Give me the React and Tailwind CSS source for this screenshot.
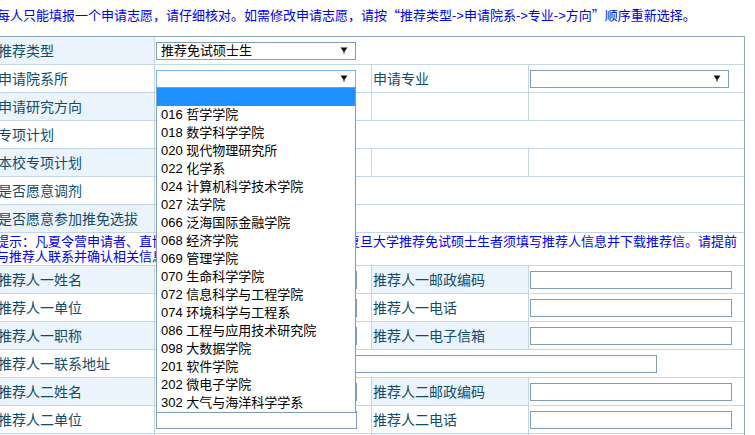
import React from "react";

const FONT = { fontFamily: '"Liberation Sans", "Noto Sans CJK SC", sans-serif' };

function Arrow() {
  return (
    <svg width="8" height="7" viewBox="0 0 8 7" className="shrink-0">
      <path d="M0.5 0.5H7.5L4 5.5Z" fill="#111" />
      <rect x="3.5" y="5" width="1" height="1.5" fill="#111" />
    </svg>
  );
}

function Select({ text = "", w = "w-[200px]", border = "border-[#7f9db9]" }) {
  return (
    <div className={`flex items-center justify-between h-[18px] ${w} border ${border} bg-white pl-[4px] pr-[7px] text-[13px] leading-[16px] text-black`}>
      <span className="whitespace-nowrap">{text}</span>
      <Arrow />
    </div>
  );
}

function Input({ w = "w-[201px]" }) {
  return <div className={`h-[18px] ${w} border border-[#7f9db9] bg-white`} />;
}

const options = [
  "",
  "016 哲学学院",
  "018 数学科学学院",
  "020 现代物理研究所",
  "022 化学系",
  "024 计算机科学技术学院",
  "027 法学院",
  "066 泛海国际金融学院",
  "068 经济学院",
  "069 管理学院",
  "070 生命科学学院",
  "072 信息科学与工程学院",
  "074 环境科学与工程系",
  "086 工程与应用技术研究院",
  "098 大数据学院",
  "201 软件学院",
  "202 微电子学院",
  "302 大气与海洋科学学系",
];

const LBL = "text-[14px] leading-[18px] text-[#124c6c] whitespace-nowrap";
const ROW = "flex h-[28px] border-b border-[#c3d6e7]";

function Label({ children, blue, w = "w-[159px]", pl = "pl-[2px]" }) {
  return (
    <div className={`${w} shrink-0 flex items-center border-r border-[#c3d6e7] ${pl} ${blue ? "bg-[#ebf4fc]" : "bg-white"} ${LBL}`}>
      {children}
    </div>
  );
}

function Cell({ children, w, last }) {
  return (
    <div className={`${w} shrink-0 flex items-center pl-[1px] ${last ? "" : "border-r border-[#c3d6e7]"}`}>
      {children}
    </div>
  );
}

function FullRow({ label, blue, children }) {
  return (
    <div className={ROW}>
      <Label blue={blue}>{label}</Label>
      <div className="flex-1 flex items-center pl-[1px]">{children}</div>
    </div>
  );
}

function FourRow({ label, blue, c2, label2, blue2, c4 }) {
  return (
    <div className={ROW}>
      <Label blue={blue}>{label}</Label>
      <Cell w="w-[217px]">{c2}</Cell>
      <Label blue={blue2} w="w-[157px]" pl="pl-[1px]">{label2}</Label>
      <Cell w="w-[215px]" last>{c4}</Cell>
    </div>
  );
}

const Q = ({ children }) => (
  <span className="inline-block w-[13px] text-center" style={{ fontFamily: '"Noto Sans CJK SC", sans-serif' }}>
    {children}
  </span>
);

export default function App() {
  return (
    <div className="w-[755px] h-[435px] overflow-hidden bg-white" style={FONT}>
      <div className="h-[36px] pt-[6px] -ml-[3px] text-[13px] leading-[18px] text-[#0000f0] whitespace-nowrap">
        每人只能填报一个申请志愿，请仔细核对。如需修改申请志愿，请按<Q>“</Q>推荐类型-&gt;申请院系-&gt;专业-&gt;方向<Q>”</Q>顺序重新选择。
      </div>
      <div className="-ml-[4px] w-[749px] border-t border-r border-[#8ea5bb]">
        <FullRow label="推荐类型" blue>
          <Select text="推荐免试硕士生" />
        </FullRow>
        <div className={ROW}>
          <Label>申请院系所</Label>
          <Cell w="w-[217px]">
            <div className="relative">
              <Select border="border-[#7eb4ea]" />
              <div className="absolute left-0 top-[17px] z-10 w-[200px] border border-[#7f9db9] bg-white">
                {options.map((o, i) => (
                  <div
                    key={i}
                    className={`h-[18px] pl-[4px] text-[13px] leading-[18px] whitespace-nowrap ${i === 0 ? "bg-[#1e90ff] text-white" : "text-black"}`}
                  >
                    {o}
                  </div>
                ))}
              </div>
            </div>
          </Cell>
          <Label w="w-[157px]" pl="pl-[1px]">申请专业</Label>
          <Cell w="w-[215px]" last>
            <Select w="w-[199px]" />
          </Cell>
        </div>
        <FourRow label="申请研究方向" blue />
        <FullRow label="专项计划" />
        <FourRow label="本校专项计划" blue />
        <FullRow label="是否愿意调剂" />
        <FullRow label="是否愿意参加推免选拔" blue />
        <div className="h-[33px] border-b border-[#c3d6e7] pt-[1px] text-[13px] leading-[15px] text-[#0000f0] whitespace-nowrap">
          提示：凡夏令营申请者、直博生申请者无需填写推荐信，申请复旦大学推荐免试硕士生者须填写推荐人信息并下载推荐信。请提前
          <br />
          与推荐人联系并确认相关信息。
        </div>
        <FourRow label="推荐人一姓名" blue c2={<Input />} label2="推荐人一邮政编码" blue2 c4={<Input w="w-[202px]" />} />
        <FourRow label="推荐人一单位" c2={<Input />} label2="推荐人一电话" c4={<Input w="w-[202px]" />} />
        <FourRow label="推荐人一职称" blue c2={<Input />} label2="推荐人一电子信箱" blue2 c4={<Input w="w-[202px]" />} />
        <FullRow label="推荐人一联系地址">
          <Input w="w-[501px]" />
        </FullRow>
        <FourRow label="推荐人二姓名" blue c2={<Input />} label2="推荐人二邮政编码" blue2 c4={<Input w="w-[202px]" />} />
        <FourRow label="推荐人二单位" c2={<Input />} label2="推荐人二电话" c4={<Input w="w-[202px]" />} />
        <FourRow label="推荐人二职称" blue c2={<Input />} label2="推荐人二电子信箱" blue2 c4={<Input w="w-[202px]" />} />
      </div>
    </div>
  );
}
